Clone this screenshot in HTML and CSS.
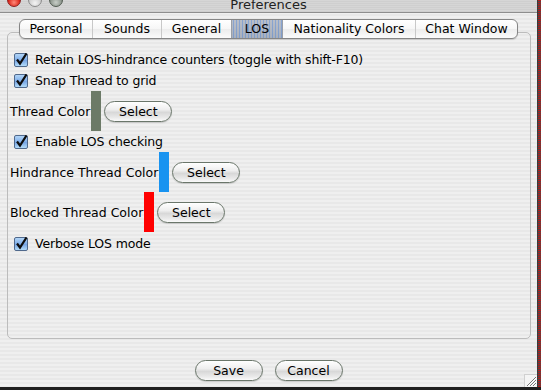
FILE: index.html
```html
<!DOCTYPE html>
<html>
<head>
<meta charset="utf-8">
<title>Preferences</title>
<link rel="stylesheet" href="styles.css">
</head>
<body>
<div class="screen">
  <div class="window">
    <div class="titlebar">
      <div class="lights">
        <span class="light light-close"></span>
        <span class="light light-min"></span>
        <span class="light light-zoom"></span>
      </div>
      <div class="title">Preferences</div>
      <div></div>
    </div>
    <div class="content">
      <div class="tabs">
        <div class="tab tab-personal">Personal</div>
        <div class="tab tab-sounds">Sounds</div>
        <div class="tab tab-general">General</div>
        <div class="tab tab-los selected">LOS</div>
        <div class="tab tab-nationality">Nationality Colors</div>
        <div class="tab tab-chat">Chat Window</div>
      </div>
      <div class="panel">
        <div class="check-row">
          <span class="cb"><svg width="14" height="14" viewBox="0 0 14 14"><path d="M3 6.5 L6 10.5 L12.5 0.5" stroke="#0d0d0d" stroke-width="2.2" fill="none"/></svg></span>
          <span class="check-text">Retain LOS-hindrance counters (toggle with shift-F10)</span>
        </div>
        <div class="check-row">
          <span class="cb"><svg width="14" height="14" viewBox="0 0 14 14"><path d="M3 6.5 L6 10.5 L12.5 0.5" stroke="#0d0d0d" stroke-width="2.2" fill="none"/></svg></span>
          <span class="check-text">Snap Thread to grid</span>
        </div>
        <div class="color-row">
          <span class="label">Thread Color</span>
          <span class="swatch swatch-thread"></span>
          <button class="btn">Select</button>
        </div>
        <div class="check-row">
          <span class="cb"><svg width="14" height="14" viewBox="0 0 14 14"><path d="M3 6.5 L6 10.5 L12.5 0.5" stroke="#0d0d0d" stroke-width="2.2" fill="none"/></svg></span>
          <span class="check-text">Enable LOS checking</span>
        </div>
        <div class="color-row">
          <span class="label">Hindrance Thread Color</span>
          <span class="swatch swatch-hindrance"></span>
          <button class="btn">Select</button>
        </div>
        <div class="color-row">
          <span class="label">Blocked Thread Color</span>
          <span class="swatch swatch-blocked"></span>
          <button class="btn">Select</button>
        </div>
        <div class="check-row verbose">
          <span class="cb"><svg width="14" height="14" viewBox="0 0 14 14"><path d="M3 6.5 L6 10.5 L12.5 0.5" stroke="#0d0d0d" stroke-width="2.2" fill="none"/></svg></span>
          <span class="check-text">Verbose LOS mode</span>
        </div>
      </div>
      <div class="footer">
        <button class="btn">Save</button>
        <button class="btn">Cancel</button>
      </div>
    </div>
    <div class="grip">
      <svg width="13" height="13" viewBox="0 0 13 13">
        <path d="M3 12 L12 3 M6 12 L12 6 M9 12 L12 9" stroke="#777" stroke-width="1" fill="none"/>
        <path d="M4 12 L12 4 M7 12 L12 7 M10 12 L12 10" stroke="#fff" stroke-width="1" fill="none"/>
      </svg>
    </div>
  </div>
  <div class="edge"></div>
</div>
</body>
</html>
```
FILE: styles.css
```css
* { box-sizing: border-box; }
html, body { margin: 0; padding: 0; }
body {
  width: 541px;
  height: 390px;
  overflow: hidden;
  background: #1e1e1e;
  font-family: "DejaVu Sans", "Liberation Sans", sans-serif;
  font-size: 12.5px;
  color: #000;
}
.screen { display: flex; height: 390px; }
.window {
  position: relative;
  width: 537px;
  height: 387px;
  display: flex;
  flex-direction: column;
  background: repeating-linear-gradient(to bottom, #efefef 0 2px, #e8e8e8 2px 4px);
}
.edge {
  width: 4px;
  height: 387px;
  border-left: 1px solid #3a3a3a;
  background: repeating-linear-gradient(to bottom, #b81818 0 1px, #4a4a4a 1px 2px);
}

/* title bar */
.titlebar {
  height: 13px;
  flex: none;
  display: grid;
  grid-template-columns: 1fr auto 1fr;
  overflow: hidden;
  border-bottom: 1px solid #8e8e8e;
  background: repeating-linear-gradient(to bottom, #d6d6d6 0 1px, #cfcfcf 1px 2px);
}
.lights { display: flex; gap: 7px; padding-left: 7px; }
.light {
  width: 14px;
  height: 14px;
  margin-top: -7px;
  border-radius: 50%;
  border: 1px solid #8a8a8a;
  background: radial-gradient(circle at 50% 75%, #f4f4f4, #bdbdbd 80%);
}
.light-close {
  border-color: #8c1f1f;
  background: radial-gradient(circle at 50% 70%, #ff8a7a, #d81c10 60%, #9a1010);
}
.light-zoom {
  border-color: #505a50;
  background: radial-gradient(circle at 50% 70%, #c8cec8, #7c867c 70%);
}
.title {
  font-size: 13px;
  line-height: 13px;
  margin-top: -2px;
  color: #222;
}

/* content */
.content {
  flex: 1;
  display: flex;
  flex-direction: column;
  padding-top: 6px;
}
.tabs {
  position: relative;
  z-index: 1;
  display: flex;
  align-self: flex-start;
  margin-left: 19px;
  height: 20px;
  border: 1px solid #858585;
  border-radius: 6px;
  overflow: hidden;
  background: linear-gradient(to bottom, #ffffff, #f6f6f6 50%, #ececec 51%, #fbfbfb);
  box-shadow: 0 1px 1px rgba(0,0,0,0.15);
}
.tab {
  line-height: 18px;
  text-align: center;
  border-left: 1px solid #c8c8c8;
  white-space: nowrap;
}
.tab-personal { width: 72px; border-left: none; }
.tab-sounds { width: 69px; }
.tab-general { width: 70px; }
.tab-los { width: 51px; }
.tab-nationality { width: 133px; }
.tab-chat { width: 102px; }
.tab.selected {
  border-left-color: #9a9fa8;
  background:
    radial-gradient(circle, rgba(30,110,230,0.3) 0.5px, transparent 0.9px) 0 0 / 3px 2px,
    linear-gradient(to bottom, #b9bec8, #a9b0bc);
}
.tab.selected + .tab { border-left-color: #9a9fa8; }

.panel {
  margin-left: 7px;
  margin-top: -7px;
  width: 524px;
  height: 307px;
  flex: none;
  border: 1px solid #bcbcbc;
  border-radius: 5px;
  padding-top: 16px;
  display: flex;
  flex-direction: column;
}
.check-row {
  display: flex;
  align-items: center;
  gap: 7px;
  height: 21px;
  padding-left: 6px;
}
.check-text { letter-spacing: -0.15px; }
.check-row.verbose { margin-top: 1px; }
.cb {
  position: relative;
  width: 14px;
  height: 14px;
  flex: none;
  border: 1px solid #50698c;
  border-radius: 2px;
  background:
    radial-gradient(circle, rgba(255,255,255,0.45) 0.6px, transparent 1px) 0 0 / 2px 2px,
    linear-gradient(to bottom, #8cc0f2, #3f86e0 50%, #2f73d4 51%, #8ccaf8);
}
.cb svg { position: absolute; left: -1px; top: -1px; }

.color-row {
  display: flex;
  align-items: center;
  height: 40px;
  padding-left: 2px;
}
.swatch {
  width: 10px;
  align-self: stretch;
  margin-left: 1px;
  flex: none;
}
.swatch-thread { background: #6c7a67; }
.swatch-hindrance { background: #1893f0; }
.swatch-blocked { background: #ff0000; }

.btn {
  width: 68px;
  height: 21px;
  padding: 0;
  border: 1px solid #6a766a;
  border-radius: 11px;
  font-family: inherit;
  font-size: 12.5px;
  color: #000;
  background: linear-gradient(to bottom, #ffffff, #eeeeee 40%, #d8d8d8 55%, #e8e8e8 80%, #fafafa);
  box-shadow: 0 1px 1px rgba(0,0,0,0.15);
}
.color-row .btn { margin-left: 3px; }

.footer {
  display: flex;
  justify-content: center;
  gap: 12px;
  padding-top: 21px;
}

.grip {
  position: absolute;
  right: 0;
  bottom: 0;
  width: 13px;
  height: 13px;
  background: #f4f4f4;
  border-top: 1px solid #d0d0d0;
  border-left: 1px solid #d0d0d0;
}
.grip svg { display: block; margin: -1px 0 0 -1px; }
```
